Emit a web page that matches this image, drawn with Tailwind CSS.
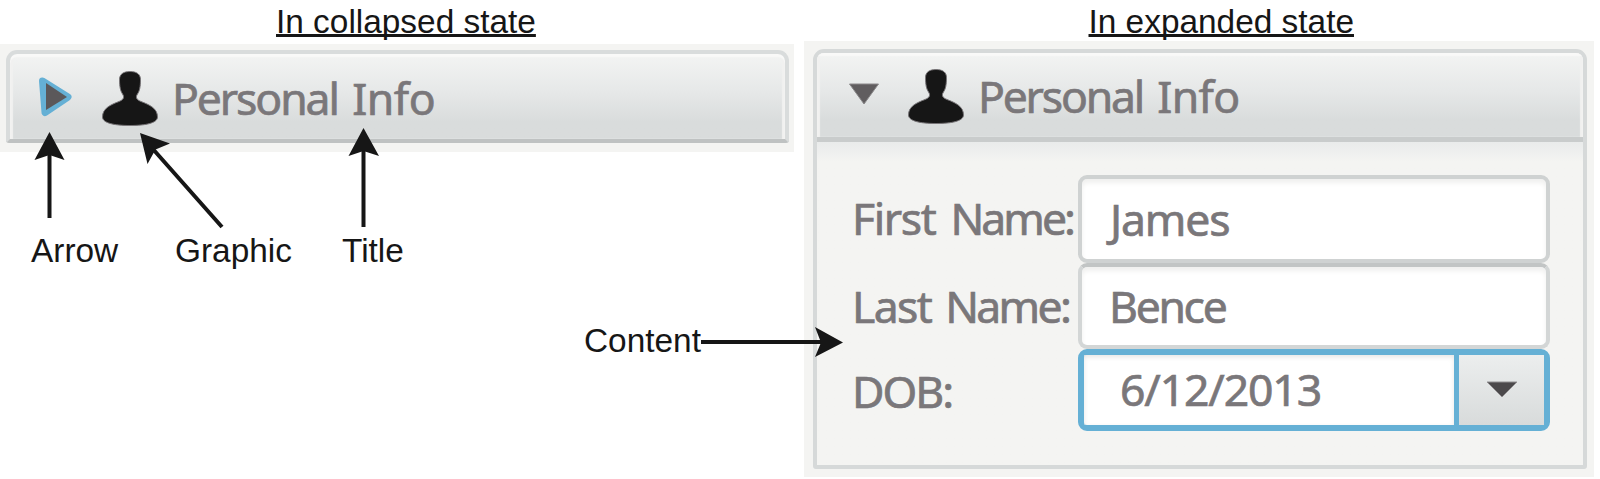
<!DOCTYPE html>
<html lang="en">
<head>
<meta charset="utf-8">
<title>TitledPane states</title>
<script src="https://cdn.jsdelivr.net/npm/@tailwindcss/browser@4"></script>
</head>
<body class="bg-white">
<svg class="hidden">
  <symbol id="person" viewBox="0 0 56 55">
    <path d="M28 .5C21 .5 17.500 3.500 17.500 8.500C17.500 16 18.500 20 20.500 23C22.500 26 22 28.500 17 30.500C8 34 .5 37.500 .5 46C.5 52 12 54.500 28 54.500S55.500 52 55.500 46C55.500 37.500 48 34 39 30.500C34 28.500 33.500 26 35.500 23C37.500 20 38.500 16 38.500 8.500C38.500 3.500 35 .5 28 .5Z"/>
  </symbol>
</svg>
<main class="relative flex w-[1600px] h-[479px] overflow-hidden bg-white text-[#161616] font-['Liberation_Sans',sans-serif] text-[33.4px]">
  <section class="w-[804px] flex flex-col">
    <h2 class="h-11 pl-[276px] leading-[44px] underline decoration-[3px] underline-offset-[1px] [text-decoration-skip-ink:none] whitespace-nowrap">In collapsed state</h2>
    <div class="w-[794px] h-[108px] bg-[#f4f4f2] pt-[6px] pl-[6px]">
      <div class="w-[783px] h-[93px] rounded-t-[11px] rounded-b-[3px] border-4 border-[#d9dcdc] border-b-[#bfc2c2] bg-linear-to-b from-[#f3f4f3] via-[#e6e8e8] via-45% to-[#d9dcdc] to-80% shadow-[inset_0_3px_1px_#f9f9f8,inset_3px_0_1px_#f1f1f0,inset_-3px_0_1px_#f1f1f0] flex">
        <svg class="mt-[22px] ml-[28px] w-9 h-[42px] shrink-0" viewBox="0 0 36 42"><path d="M4.500 5L30 21L7 36.500Z" fill="#65b0d5" stroke="#65b0d5" stroke-width="7" stroke-linejoin="round"/><path d="M8 7L29 21L8 34Z" fill="#5b585a"/></svg>
        <svg class="mt-[17px] ml-[28px] w-[56px] h-[55px] shrink-0 fill-[#161616] stroke-[#777477] stroke-1"><use href="#person"/></svg>
        <span class="ml-[14px] h-[85px] leading-[87px] text-[44.500px] tracking-[-2.1px] [word-spacing:5px] font-['Noto_Sans',sans-serif] text-[#7a777a] [-webkit-text-stroke:0.7px_#7a777a] whitespace-nowrap">Personal <span class="tracking-[-0.5px]">Info</span></span>
      </div>
    </div>
    <div class="h-[138px] pt-[79px] flex whitespace-nowrap leading-[40px]">
      <span class="w-[145px] pl-[31px]">Arrow</span>
      <span class="w-[166px] pl-[30px]">Graphic</span>
      <span class="pl-[31px]">Title</span>
    </div>
    <div class="pt-[31px] pl-[584px] leading-[40px]">Content</div>
  </section>
  <section class="w-[796px] flex flex-col">
    <h2 class="h-[41px] pl-[284.500px] leading-[44px] underline decoration-[3px] underline-offset-[1px] [text-decoration-skip-ink:none] whitespace-nowrap">In expanded state</h2>
    <div class="w-[790px] h-[436px] bg-[#f4f4f2] pt-[8px] pl-[9px]">
      <div class="w-[774px] h-[420px] rounded-t-[11px] rounded-b-[3px] border-4 border-[#d6d9d9] flex flex-col overflow-hidden text-[#7a777a] [-webkit-text-stroke:0.7px_#7a777a] tracking-[-1.15px] font-['Noto_Sans',sans-serif] text-[44.500px] whitespace-nowrap">
        <div class="h-[89px] shrink-0 border-b-[5px] border-[#c9cccc] bg-linear-to-b from-[#f3f4f3] via-[#e6e8e8] via-45% to-[#d9dcdc] to-80% shadow-[inset_0_3px_1px_#f9f9f8,inset_3px_0_1px_#f1f1f0,inset_-3px_0_1px_#f1f1f0] flex">
          <svg class="mt-[30px] ml-[31px] w-[32px] h-[22px] shrink-0" viewBox="0 0 32 22"><path d="M1.500 1H30.500L16 21Z" fill="#605d5f" stroke="#8a888a"/></svg>
          <svg class="mt-[16px] ml-[28px] w-[56px] h-[55px] shrink-0 fill-[#161616] stroke-[#777477] stroke-1"><use href="#person"/></svg>
          <span class="ml-[14px] leading-[85px] tracking-[-2.2px] [word-spacing:5px]">Personal <span class="tracking-[-0.7px]">Info</span></span>
        </div>
        <div class="grow bg-linear-to-b from-[#e9ebeb] to-[#f4f4f2] to-[20px] pt-[33px] pl-[35px] grid grid-cols-[226px_472px] grid-rows-[88px_86px_82px] content-start">
          <span class="leading-[86px] tracking-[-1.4px] [word-spacing:5px]">First <span class="tracking-[-3px]">Name:</span></span>
          <div class="rounded-[9px] border-4 border-[#cfd2d2] bg-white shadow-[inset_0_4px_5px_#f0f0ef] pl-[28px] leading-[79px]">James</div>
          <span class="leading-[86px] tracking-[-1.6px] [word-spacing:4px]">Last <span class="tracking-[-2.7px]">Name:</span></span>
          <div class="rounded-[9px] border-4 border-[#d3d6d6] border-t-[#c2c5c5] bg-white shadow-[inset_0_4px_5px_#f0f0ef] pl-[27px] leading-[78px] tracking-[-2.3px]">Bence</div>
          <span class="leading-[84px] tracking-[-2px]">DOB:</span>
          <div class="rounded-[9px] border-[6px] border-[#65b0d5] bg-white flex">
            <span class="w-[375px] pl-[36px] border-r-[5px] border-[#65b0d5] shadow-[inset_0_2px_5px_#e6e6e5] leading-[68px]">6/12/2013</span>
            <span class="grow bg-linear-to-b from-[#eceeee] to-[#d8dbdb] flex justify-center"><svg class="mt-[26px] w-[32px] h-[17px]" viewBox="0 0 32 17"><path d="M1 1H31L16 16Z" fill="#4b494b" stroke="#918f91"/></svg></span>
          </div>
        </div>
      </div>
    </div>
  </section>
  <svg class="absolute inset-0 w-[1600px] h-[479px] pointer-events-none fill-[#161616] stroke-[#161616]" viewBox="0 0 1600 479">
    <g stroke-width="4"><path d="M49.500 218V150M363.500 227V150M222 227L152 148M701 342H822"/></g>
    <g stroke="none">
      <path d="M49.500 132L64.500 160L49.500 155L34.500 160Z"/>
      <path d="M363.500 128L379 156L363.500 151L348.500 156Z"/>
      <path d="M140 133L170 143.500L155.500 149.500L147.500 164Z"/>
      <path d="M843 342.500L815 357L821 342.500L815 327Z"/>
    </g>
  </svg>
</main>
</body>
</html>
